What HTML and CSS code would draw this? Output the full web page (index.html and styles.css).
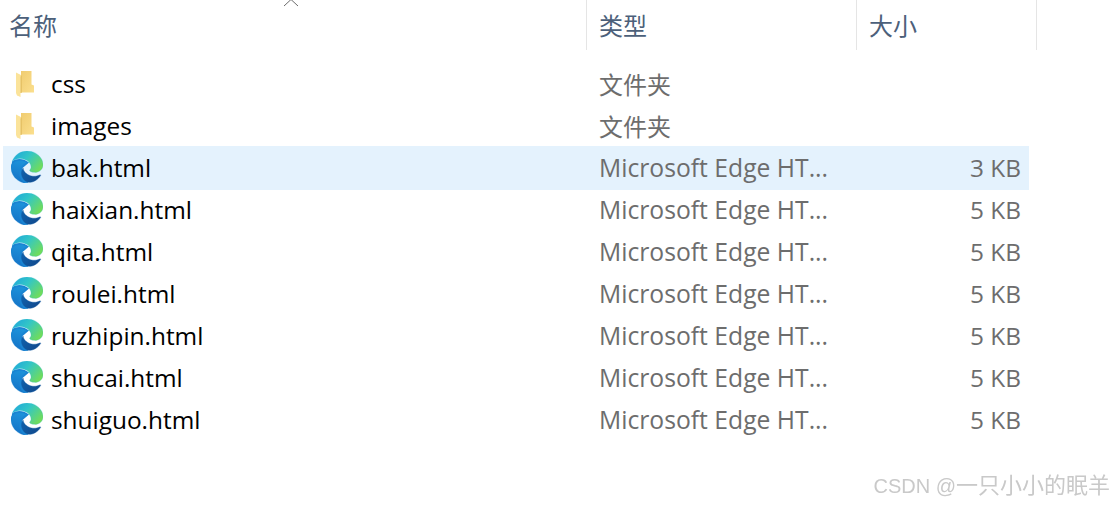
FILE: index.html
```html
<!DOCTYPE html>
<html lang="zh-CN">
<head>
  <meta charset="UTF-8" />
  <meta name="viewport" content="width=device-width, initial-scale=1.0" />
  <title>文件列表</title>
  <link rel="stylesheet" href="styles.css">
</head>
<body>
  <svg class="defs" width="0" height="0" aria-hidden="true">
    <defs>
      <linearGradient id="edgeTop" x1="0" y1="0.1" x2="1" y2="0.7">
        <stop offset="0" stop-color="#1ea6dc" />
        <stop offset="0.45" stop-color="#33c6c6" />
        <stop offset="1" stop-color="#72dd58" />
      </linearGradient>
      <linearGradient id="edgeLeft" x1="0.6" y1="0" x2="0.4" y2="1">
        <stop offset="0" stop-color="#1d92da" />
        <stop offset="1" stop-color="#1572c6" />
      </linearGradient>
      <linearGradient id="edgeLow" x1="0" y1="0" x2="1" y2="0.6">
        <stop offset="0" stop-color="#0f62ad" />
        <stop offset="1" stop-color="#114a8e" />
      </linearGradient>
      <linearGradient id="folderBack" x1="0" y1="0" x2="1" y2="1">
        <stop offset="0" stop-color="#f0cc70" />
        <stop offset="1" stop-color="#fbdf8e" />
      </linearGradient>
      <symbol id="edge" viewBox="0 0 24 24">
        <path fill="#1a84d2" d="M0.9 7.6C4 5.4 9 5 13.5 8.7L8.5 13L10 20L13 23.9L10 24L3 20L0 12Z" />
        <path fill="url(#edgeLeft)" stroke="#1a84d2" stroke-width="0.3" d="M6.36 16.59q0 1.1.27 2.15.27 1.06.78 2.03.51.96 1.24 1.77.74.82 1.66 1.4-1.47-.2-2.8-.74-1.33-.55-2.48-1.37-1.15-.83-2.08-1.9-.92-1.07-1.58-2.33T.36 14.94Q0 13.54 0 12.06q0-.81.32-1.49.31-.68.83-1.23.53-.55 1.2-.96.66-.4 1.35-.66.74-.27 1.5-.39.78-.12 1.55-.12.7 0 1.42.1.72.12 1.4.35.68.23 1.32.57.63.35 1.16.83-.35 0-.7.07-.33.07-.65.23v-.02q-.63.28-1.2.74-.57.46-1.05 1.04-.48.58-.87 1.26-.38.67-.65 1.39-.27.71-.42 1.44-.15.72-.15 1.38Z" />
        <path fill="url(#edgeTop)" stroke="#2bb8d0" stroke-width="0.2" d="M11.96.06q1.7 0 3.33.39 1.63.38 3.07 1.15 1.43.77 2.62 1.93 1.18 1.16 1.98 2.7.49.94.76 1.96.28 1 .28 2.08 0 .89-.23 1.7-.24.8-.69 1.48-.45.68-1.1 1.22-.64.53-1.45.88-.54.24-1.11.36-.58.13-1.16.13-.42 0-.97-.03-.54-.03-1.1-.12-.55-.1-1.05-.28-.5-.19-.84-.5-.12-.09-.23-.24-.1-.16-.1-.33 0-.15.16-.35.16-.2.35-.5.2-.28.36-.68.16-.4.16-.95 0-1.06-.4-1.96-.4-.91-1.06-1.64-.66-.74-1.52-1.28-.86-.55-1.79-.89-.84-.3-1.72-.44-.87-.14-1.76-.14-1.55 0-3.06.45T.94 7.55q.71-1.74 1.81-3.13 1.1-1.38 2.52-2.35Q6.68 1.1 8.37.58q1.7-.52 3.58-.52Z" />
        <path fill="url(#edgeLow)" stroke="#0f5aa4" stroke-width="0.3" d="M21.86 17.86q.14 0 .25.12.1.13.1.25t-.11.33l-.32.46-.43.53-.44.5q-.21.25-.38.42l-.22.23q-.58.53-1.34 1.04-.76.51-1.6.91-.86.4-1.74.64t-1.67.24q-.9 0-1.69-.28-.8-.28-1.48-.78-.68-.5-1.22-1.17-.53-.66-.92-1.44-.38-.77-.58-1.6-.2-.83-.2-1.67 0-1 .32-1.96.33-.97.87-1.8.14.95.55 1.77.41.82 1.02 1.5.6.68 1.38 1.21.78.54 1.64.9.86.36 1.77.56.92.2 1.8.2 1.12 0 2.18-.24 1.06-.23 2.06-.72l.2-.1.2-.05Z" />
      </symbol>
      <symbol id="folder" viewBox="0 0 18 26">
        <path d="M5 0H15.5V13.5L18 14.5V21.5H5Z" fill="url(#folderBack)" />
        <path d="M0 1.5L6 4.5V21.5L4.5 22V26L1 24.5L0 22Z" fill="#fbe39a" />
        <path d="M5.2 4.1L6 4.5V21.5L4.5 22V6Z" fill="#e6c266" />
      </symbol>
    </defs>
  </svg>

  <div class="explorer">
    <svg class="sort-caret" width="16" height="8" viewBox="0 0 16 8" aria-hidden="true">
      <path d="M1 7L8 0.5L15 7" fill="none" stroke="#6b6b6b" stroke-width="1" />
    </svg>

    <header class="columns">
      <div class="col col-name">名称</div>
      <div class="col col-type">类型</div>
      <div class="col col-size">大小</div>
    </header>

    <ul class="files">
      <li class="file">
        <svg class="icon-folder"><use href="#folder" /></svg>
        <span class="file-name">css</span>
        <span class="file-type file-type-cjk">文件夹</span>
        <span class="file-size"></span>
      </li>
      <li class="file">
        <svg class="icon-folder"><use href="#folder" /></svg>
        <span class="file-name">images</span>
        <span class="file-type file-type-cjk">文件夹</span>
        <span class="file-size"></span>
      </li>
      <li class="file selected">
        <svg class="icon-edge"><use href="#edge" /></svg>
        <span class="file-name">bak.html</span>
        <span class="file-type">Microsoft Edge HT...</span>
        <span class="file-size">3 KB</span>
      </li>
      <li class="file">
        <svg class="icon-edge"><use href="#edge" /></svg>
        <span class="file-name">haixian.html</span>
        <span class="file-type">Microsoft Edge HT...</span>
        <span class="file-size">5 KB</span>
      </li>
      <li class="file">
        <svg class="icon-edge"><use href="#edge" /></svg>
        <span class="file-name">qita.html</span>
        <span class="file-type">Microsoft Edge HT...</span>
        <span class="file-size">5 KB</span>
      </li>
      <li class="file">
        <svg class="icon-edge"><use href="#edge" /></svg>
        <span class="file-name">roulei.html</span>
        <span class="file-type">Microsoft Edge HT...</span>
        <span class="file-size">5 KB</span>
      </li>
      <li class="file">
        <svg class="icon-edge"><use href="#edge" /></svg>
        <span class="file-name">ruzhipin.html</span>
        <span class="file-type">Microsoft Edge HT...</span>
        <span class="file-size">5 KB</span>
      </li>
      <li class="file">
        <svg class="icon-edge"><use href="#edge" /></svg>
        <span class="file-name">shucai.html</span>
        <span class="file-type">Microsoft Edge HT...</span>
        <span class="file-size">5 KB</span>
      </li>
      <li class="file">
        <svg class="icon-edge"><use href="#edge" /></svg>
        <span class="file-name">shuiguo.html</span>
        <span class="file-type">Microsoft Edge HT...</span>
        <span class="file-size">5 KB</span>
      </li>
    </ul>

    <div class="watermark"><span class="watermark-site">CSDN @</span>一只小小的眠羊</div>
  </div>
</body>
</html>
```

FILE: styles.css
```css
html, body {
  margin: 0;
  padding: 0;
  background: #fff;
}
body {
  width: 1113px;
  height: 505px;
  overflow: hidden;
  font-family: "Open Sans", "Noto Sans CJK SC", sans-serif;
}
.defs {
  display: block;
  height: 0;
}
.explorer {
  position: relative;
  height: 505px;
}
.sort-caret {
  position: absolute;
  left: 283px;
  top: -1px;
}

/* header */
.columns {
  display: grid;
  grid-template-columns: 587px 270px 180px;
  height: 50px;
}
.col {
  display: flex;
  align-items: center;
  padding: 0 0 2px 12px;
  height: 50px;
  box-sizing: border-box;
  border-right: 1px solid #e5e5e5;
  font-family: "Noto Sans CJK SC", sans-serif;
  font-size: 24px;
  color: #4c607a;
}
.col-name {
  padding-left: 9px;
}

/* rows */
.files {
  list-style: none;
  margin: 12px 0 0 3px;
  padding: 0;
  width: 1026px;
}
.file {
  display: grid;
  grid-template-columns: 48px 548px 1fr;
  align-items: center;
  height: 42px;
  font-size: 24.4px;
  color: #000;
}
.file.selected {
  box-sizing: border-box;
  height: 44px;
  margin-bottom: -2px;
  padding-bottom: 2px;
  background: #e4f2fd;
}
.icon-folder {
  width: 18px;
  height: 26px;
  margin: 2px 0 0 13px;
}
.icon-edge {
  width: 32px;
  height: 32px;
  margin-left: 8px;
}
.file-type {
  font-size: 24.7px;
  color: #6d6d6d;
  grid-column: 3;
  grid-row: 1;
}
.file-type-cjk {
  font-size: 24px;
}
.file-size {
  color: #6d6d6d;
  grid-column: 3;
  grid-row: 1;
  justify-self: end;
  margin-right: 8px;
}

.watermark {
  position: absolute;
  right: 3px;
  top: 467px;
  font-family: "Liberation Sans", "Noto Sans CJK SC", sans-serif;
  font-size: 22px;
  color: #c9c9c9;
  filter: blur(0.4px);
}
.watermark-site {
  font-size: 20px;
}
```
